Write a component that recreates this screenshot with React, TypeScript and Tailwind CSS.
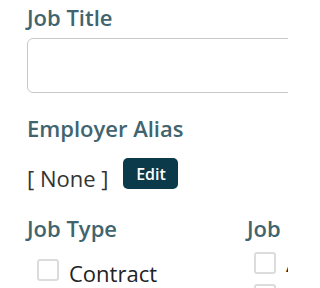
export default function App() {
  return (
    <div
      className="w-[288px] h-[288px] overflow-hidden bg-white pl-[27px] pt-[2px]"
      style={{ fontFamily: '"Open Sans", sans-serif' }}
    >
      <div className="w-[400px]">
        <label className="block text-[22px] font-semibold leading-[30px] text-[#41646e]">
          Job Title
        </label>
        <input
          type="text"
          className="mt-[6px] block h-[55px] w-[400px] rounded-[6px] border border-[#c8c8c8] bg-white"
        />

        <div className="mt-[20px] text-[22px] font-semibold leading-[30px] text-[#41646e]">
          Employer Alias
        </div>
        <div className="mt-[15px] flex items-start gap-[15px]">
          <span className="mt-[5px] text-[22px] leading-[30px] text-[#333333]">[ None ]</span>
          <button className="h-[31px] w-[55px] rounded-[5px] bg-[#0b3a4a] text-[16px] font-semibold text-white">
            Edit
          </button>
        </div>

        <div className="mt-[20px] grid grid-cols-[220px_1fr]">
          <div>
            <div className="text-[22px] font-semibold leading-[30px] text-[#41646e]">Job Type</div>
            <label className="mt-[15px] ml-[10px] flex items-start gap-[10px]">
              <span className="mt-[1px] block h-[22px] w-[22px] rounded-[3px] border-2 border-[#dcdcdc] bg-white" />
              <span className="text-[22px] leading-[30px] text-[#222222]">Contract</span>
            </label>
          </div>
          <div>
            <div className="text-[22px] font-semibold leading-[30px] text-[#41646e]">Job</div>
            <div className="mt-[9px] ml-[7px] flex flex-col gap-[10px]">
              <label className="flex items-center gap-[10px]">
                <span className="block h-[22px] w-[22px] rounded-[3px] border-2 border-[#dcdcdc] bg-white" />
                <span className="text-[22px] leading-[22px] text-[#222222]">Any</span>
              </label>
              <label className="flex items-center gap-[10px]">
                <span className="block h-[22px] w-[22px] rounded-[3px] border-2 border-[#dcdcdc] bg-white" />
                <span className="text-[22px] leading-[22px] text-[#222222]">Other</span>
              </label>
            </div>
          </div>
        </div>
      </div>
    </div>
  );
}
